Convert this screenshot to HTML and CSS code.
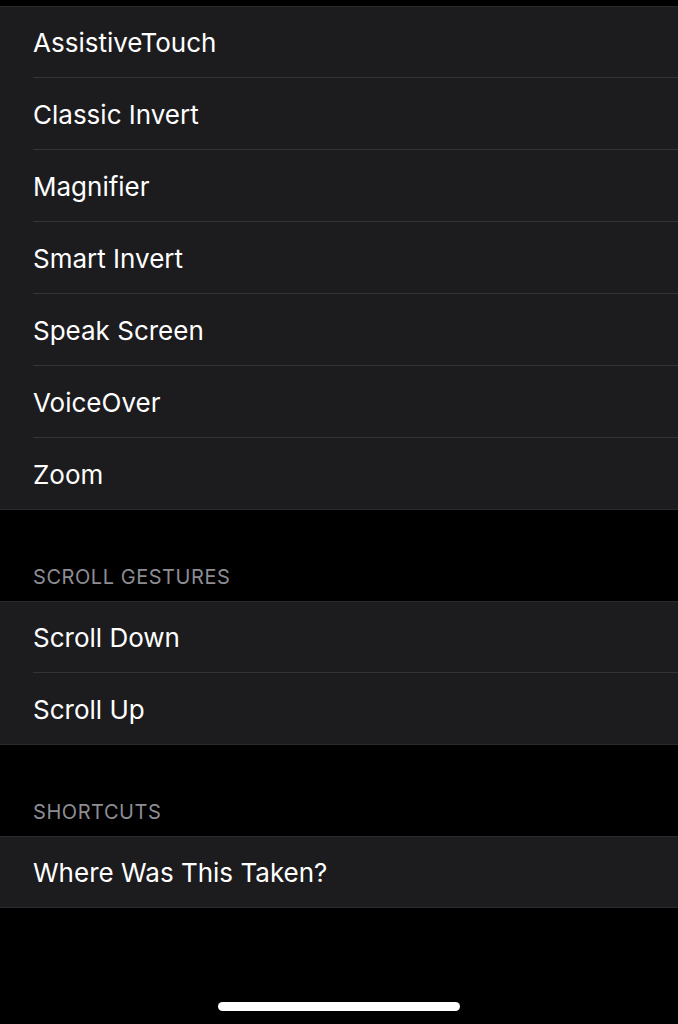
FILE: index.html
```html
<!DOCTYPE html>
<html lang="en">
<head>
    <meta charset="UTF-8">
    <meta name="viewport" content="width=device-width, initial-scale=1.0">
    <title>Accessibility Shortcuts</title>
    <link rel="stylesheet" href="styles.css">
</head>
<body>

    <!-- Accessibility features -->
    <ul class="group first">
        <li class="row">AssistiveTouch</li>
        <li class="row">Classic Invert</li>
        <li class="row">Magnifier</li>
        <li class="row">Smart Invert</li>
        <li class="row">Speak Screen</li>
        <li class="row">VoiceOver</li>
        <li class="row">Zoom</li>
    </ul>

    <!-- Scroll gestures -->
    <div class="section-header">SCROLL GESTURES</div>
    <ul class="group">
        <li class="row">Scroll Down</li>
        <li class="row">Scroll Up</li>
    </ul>

    <!-- Shortcuts -->
    <div class="section-header">SHORTCUTS</div>
    <ul class="group">
        <li class="row">Where Was This Taken?</li>
    </ul>

    <!-- Home indicator -->
    <div class="home-indicator"></div>

</body>
</html>
```

FILE: styles.css
```css
/* General */
body {
    margin: 0;
    height: 1024px;
    background-color: #000;
    color: #fff;
    font-family: Inter, "Noto Sans", sans-serif;
    position: relative;
    overflow: hidden;
}

/* Grouped list */
.group {
    list-style: none;
    margin: 0;
    padding: 0;
    background-color: #1c1c1e;
    box-shadow: inset 0 1px #2a2a2c, inset 0 -1px #2a2a2c;
}
.group.first {
    margin-top: 6px;
}
.row {
    height: 72px;
    box-sizing: border-box;
    margin-left: 33px;
    padding-top: 1px;
    display: flex;
    align-items: center;
    font-size: 26px;
    border-bottom: 1px solid #333336;
}
.row:last-child {
    border-bottom: none;
}

/* Section titles */
.section-header {
    height: 91px;
    box-sizing: border-box;
    padding: 0 0 12px 33px;
    display: flex;
    align-items: flex-end;
    font-size: 20px;
    color: #8d8d93;
    letter-spacing: 0.55px;
}

/* Home bar */
.home-indicator {
    position: absolute;
    left: 218px;
    top: 1002px;
    width: 242px;
    height: 9px;
    border-radius: 5px;
    background-color: #fff;
}
```
